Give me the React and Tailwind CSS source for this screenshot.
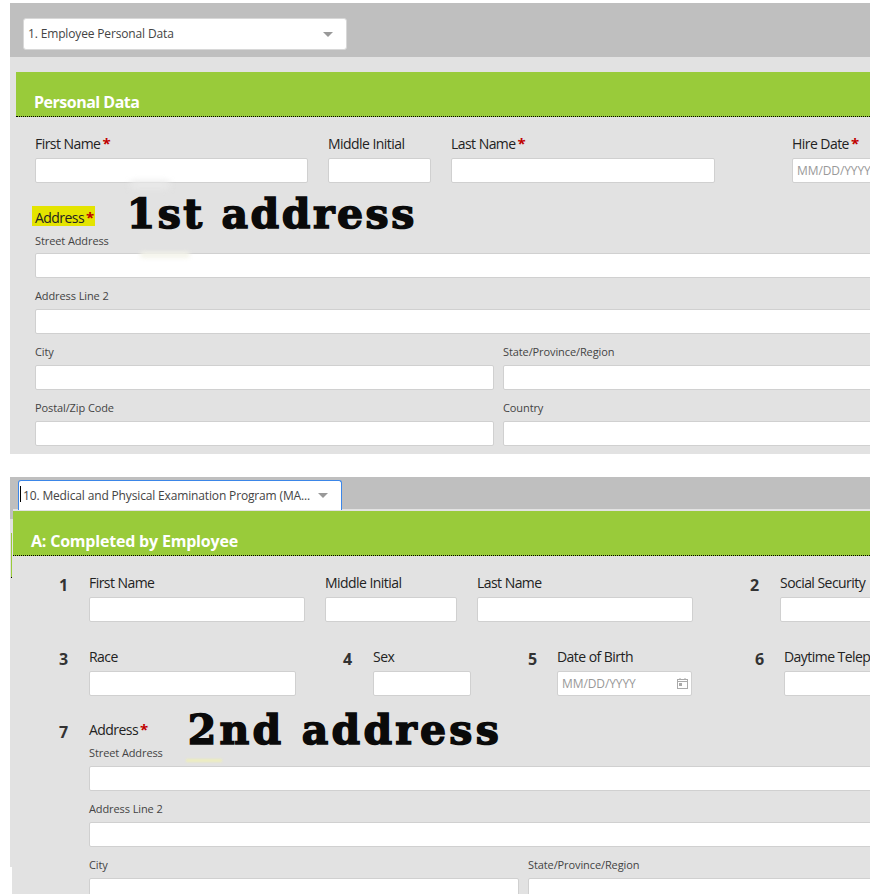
const sans = "font-['Open_Sans','Noto_Sans',sans-serif]";

const Input = ({ className = '', placeholder }) => (
  <div className={`h-[25px] bg-white border border-[#d0d0d0] rounded-[2px] flex items-center pl-1 text-[12px] tracking-[-0.1px] text-[#999] overflow-hidden whitespace-nowrap ${className}`}>
    {placeholder}
  </div>
);

const Star = () => <span className="ml-[2px] text-[15px] leading-none font-bold text-[#c00000]">*</span>;

const Field = ({ label, required, className = '', children }) => (
  <div className={`shrink-0 ${className}`}>
    <div className="h-[21px] text-[14px] leading-[21px] text-[#222] whitespace-nowrap tracking-[-0.55px]">
      {label}
      {required && <Star />}
    </div>
    {children || <Input className="mt-[4px]" />}
  </div>
);

const SubField = ({ label, className = '' }) => (
  <div className={`min-w-0 ${className}`}>
    <div className="h-[17px] text-[11px] leading-[15px] tracking-[-0.1px] text-[#444]">{label}</div>
    <Input className="mt-[4px]" />
  </div>
);

const Caret = () => <span className="w-0 h-0 border-x-[5px] border-x-transparent border-t-[5px] border-t-[#999]" />;

const Num = ({ children, className = '' }) => (
  <div className={`shrink-0 text-[16px] font-bold text-[#333] leading-[21px] mt-[3px] ${className}`}>{children}</div>
);

const Note = ({ children, className = '' }) => (
  <span className={`font-['DejaVu_Serif',serif] font-black text-[41px] leading-[36px] text-[#0a0a0a] whitespace-nowrap [-webkit-text-stroke:1.5px_#0a0a0a] ${className}`}>
    {children}
  </span>
);

const FirstPanel = () => (
  <section className="relative mt-[3px] ml-[10px] w-[860px] h-[451px] bg-[#e2e2e2] overflow-hidden">
    <div className="h-[54px] bg-[#bfbfbf] pl-[13px] pt-[15px]">
      <div className="w-[324px] h-[32px] bg-white border border-[#d8d8d8] rounded-[3px] flex items-center justify-between pl-1 pr-[13px] text-[12px] tracking-[-0.15px] text-[#444]">
        1. Employee Personal Data
        <Caret />
      </div>
    </div>
    <div className="mt-[15px] ml-[6px] h-[45px] bg-[#99cb3a] border-b border-dotted border-black pl-[18px] pt-[19px] text-[16px] leading-[22px] tracking-[-0.5px] font-bold text-white">
      Personal Data
    </div>
    <div className="pl-[25px]">
      <div className="mt-[16px] flex">
        <Field label="First Name" required className="w-[273px]" />
        <Field label="Middle Initial" className="ml-[20px] w-[103px]" />
        <Field label="Last Name" required className="ml-[20px] w-[264px]" />
        <Field label="Hire Date" required className="ml-[77px] w-[100px]">
          <Input className="mt-[4px]" placeholder="MM/DD/YYYY" />
        </Field>
      </div>
      <div className="mt-[18px] h-[30px] flex items-start">
        <span className="mt-[5px] h-[20px] bg-[#e4e400] text-[14px] leading-[23px] text-[#222] tracking-[-0.55px] -ml-[3px] pl-[3px] pr-px">
          Address<Star />
        </span>
        <Note className="ml-[32px] -mt-[5px] tracking-[2.5px]">1st address</Note>
      </div>
      <SubField label="Street Address" className="w-[860px] mt-[1px] [&>div:first-child]:leading-[17px]" />
      <SubField label="Address Line 2" className="w-[860px] mt-[10px]" />
      <div className="mt-[10px] flex gap-[9px]">
        <SubField label="City" className="w-[459px] shrink-0" />
        <SubField label="State/Province/Region" className="w-[400px] shrink-0" />
      </div>
      <div className="mt-[10px] flex gap-[9px]">
        <SubField label="Postal/Zip Code" className="w-[459px] shrink-0" />
        <SubField label="Country" className="w-[400px] shrink-0" />
      </div>
    </div>
    {/* leftover smudges from the marked up screenshot */}
    <div className="absolute left-[120px] top-[178px] w-[40px] h-[8px] rounded-full bg-[#e9e9e9] blur-[3px]" />
    <div className="absolute left-[130px] top-[249px] w-[50px] h-[6px] rounded-full bg-[#f4f4ea] blur-[2px]" />
  </section>
);

const SecondPanel = () => (
  <section className="relative mt-[23px] ml-[10px] w-[860px] h-[417px] bg-[#e2e2e2] overflow-hidden">
    <div className="h-[32px] bg-[#bfbfbf] pl-[8px] pt-[3px]">
      <div className="relative w-[324px] h-[30px] bg-white border border-b-0 border-[#3b86e8] rounded-t-[3px] flex items-center justify-between pl-1 pr-[13px] text-[12px] tracking-[-0.15px] text-[#444]">
        <span className="w-[294px] whitespace-nowrap overflow-hidden">10. Medical and Physical Examination Program (MA...</span>
        <Caret />
        <span className="absolute left-[1px] top-[5px] w-px h-[16px] bg-black" />
      </div>
    </div>
    <div className="ml-[3px] pt-[2px]">
      <div className="h-[45px] bg-[#99cb3a] border-b border-dotted border-black pl-[18px] pt-[19px] text-[16px] leading-[22px] tracking-[-0.2px] font-bold text-white">
        A: Completed by Employee
      </div>
      <div className="pl-[46px]">
        <div className="mt-[16px] flex">
          <Num className="w-[30px]">1</Num>
          <Field label="First Name" className="w-[216px]" />
          <Field label="Middle Initial" className="ml-[20px] w-[132px]" />
          <Field label="Last Name" className="ml-[20px] w-[216px]" />
          <Num className="ml-[57px] w-[30px]">2</Num>
          <Field label="Social Security" className="w-[100px]" />
        </div>
        <div className="mt-[24px] flex">
          <Num className="w-[30px]">3</Num>
          <Field label="Race" className="w-[207px]" />
          <Num className="ml-[47px] w-[30px]">4</Num>
          <Field label="Sex" className="w-[98px]" />
          <Num className="ml-[57px] w-[29px]">5</Num>
          <Field label="Date of Birth" className="w-[135px]">
            <div className="relative">
              <Input className="mt-[4px]" placeholder="MM/DD/YYYY" />
              <svg className="absolute right-[3px] top-[6px]" width="13" height="13" viewBox="0 0 13 13" fill="none" stroke="#aaa">
                <rect x="1.5" y="2.5" width="10" height="9" />
                <path d="M1.5 4.5h10M4 1v2M9 1v2" />
                <rect x="3.5" y="6.5" width="2" height="2" fill="#aaa" />
              </svg>
            </div>
          </Field>
          <Num className="ml-[63px] w-[29px]">6</Num>
          <Field label="Daytime Telephone" className="w-[100px]" />
        </div>
        <div className="mt-[23px] flex">
          <Num className="w-[30px]">7</Num>
          <div className="w-[800px] shrink-0">
            <div className="h-[26px] flex items-start">
              <span className="mt-px text-[14px] leading-[20px] text-[#222] tracking-[-0.55px]">
                Address<Star />
              </span>
              <Note className="ml-[40px] -mt-[7px] tracking-[3.2px]">2nd address</Note>
            </div>
            <SubField label="Street Address" />
            <SubField label="Address Line 2" className="mt-[10px]" />
            <div className="mt-[10px] flex gap-[9px]">
              <SubField label="City" className="w-[430px] shrink-0" />
              <SubField label="State/Province/Region" className="w-[361px] shrink-0" />
            </div>
          </div>
        </div>
      </div>
    </div>
    {/* page edge artefacts on the left of the pasted crop */}
    <div className="absolute left-0 top-[32px] w-[3px] h-[10px] bg-[#bfbfbf]" />
    <div className="absolute left-[1px] top-[56px] w-px h-[45px] bg-[#99cb3a] border-b border-black" />
    <div className="absolute left-0 bottom-0 w-[2px] h-[27px] bg-white" />
    <div className="absolute left-[176px] top-[282px] w-[36px] h-[3px] bg-[#eeeebb] blur-[1px]" />
  </section>
);

export default function App() {
  return (
    <div className={`w-[873px] h-[894px] overflow-hidden bg-white ${sans}`}>
      <div className="h-px -mb-px" />
      <FirstPanel />
      <SecondPanel />
    </div>
  );
}
